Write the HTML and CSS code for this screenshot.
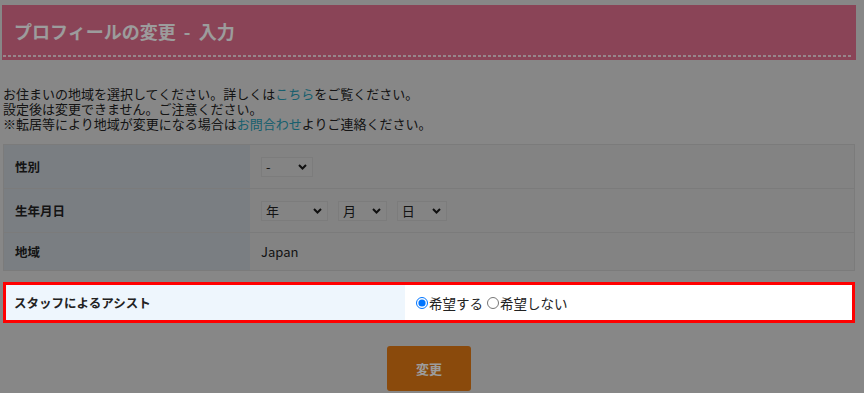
FILE: index.html
```html
<!DOCTYPE html>
<html lang="ja">
<head>
    <meta charset="UTF-8">
    <title>プロフィールの変更 - 入力</title>
    <link rel="stylesheet" href="styles.css">
</head>
<body>
    <div class="page">
        <div class="title-bar">
            <h1>プロフィールの変更 &nbsp;-&nbsp; 入力</h1>
        </div>

        <p class="note">
            お住まいの地域を選択してください。詳しくは<a href="#">こちら</a>をご覧ください。<br>
            設定後は変更できません。ご注意ください。<br>
            ※転居等により地域が変更になる場合は<a href="#">お問合わせ</a>よりご連絡ください。
        </p>

        <table class="form-table">
            <tr class="row-tall">
                <th>性別</th>
                <td>
                    <span class="sel w-sex">
                        <select><option>-</option><option>男性</option><option>女性</option></select>
                        <svg class="chev" width="9" height="6" viewBox="0 0 9 6"><path d="M1 1l3.5 3.5L8 1" fill="none" stroke="#1a1a1a" stroke-width="2"/></svg>
                    </span>
                </td>
            </tr>
            <tr class="row-tall">
                <th>生年月日</th>
                <td>
                    <span class="sel w-year">
                        <select><option>年</option></select>
                        <svg class="chev" width="9" height="6" viewBox="0 0 9 6"><path d="M1 1l3.5 3.5L8 1" fill="none" stroke="#1a1a1a" stroke-width="2"/></svg>
                    </span>
                    <span class="sel w-month">
                        <select><option>月</option></select>
                        <svg class="chev" width="9" height="6" viewBox="0 0 9 6"><path d="M1 1l3.5 3.5L8 1" fill="none" stroke="#1a1a1a" stroke-width="2"/></svg>
                    </span>
                    <span class="sel w-day">
                        <select><option>日</option></select>
                        <svg class="chev" width="9" height="6" viewBox="0 0 9 6"><path d="M1 1l3.5 3.5L8 1" fill="none" stroke="#1a1a1a" stroke-width="2"/></svg>
                    </span>
                </td>
            </tr>
            <tr class="row-short">
                <th>地域</th>
                <td>Japan</td>
            </tr>
        </table>

        <div class="assist-row">
            <div class="assist-label">スタッフによるアシスト</div>
            <div class="assist-value">
                <label><input type="radio" name="assist" checked>希望する</label>
                <label><input type="radio" name="assist">希望しない</label>
            </div>
        </div>

        <div class="actions">
            <button class="submit-btn">変更</button>
        </div>
    </div>

    <div class="shade"></div>
</body>
</html>
```

FILE: styles.css
```css
html, body {
    margin: 0;
    padding: 0;
}
body {
    background-color: #dddddd;
    color: #222;
    font-family: "Noto Sans CJK JP", "Liberation Sans", sans-serif;
    font-size: 13px;
}
.page {
    width: 852px;
    margin: 5px 0 0 3px;
}
.title-bar {
    margin: 0 -1px;
    height: 55px;
    padding: 0 3px 3px 1px;
    box-sizing: border-box;
    background-color: #e26f8f;
}
.title-bar h1 {
    margin: 0;
    height: 52px;
    padding: 3px 0 0 11px;
    box-sizing: border-box;
    line-height: 46px;
    font-size: 18px;
    font-weight: bold;
    color: #fff;
    background-image: repeating-linear-gradient(90deg, rgba(255,255,255,0.75) 0 3px, transparent 3px 5px);
    background-size: 100% 2px;
    background-position: left bottom;
    background-repeat: no-repeat;
}
.note {
    margin: 26px 0 13px;
    line-height: 15px;
}
.note a {
    color: #299cb4;
    text-decoration: none;
}
.form-table {
    width: 100%;
    border-collapse: collapse;
    border: 1px solid #cacaca;
}
.form-table th,
.form-table td {
    border-bottom: 1px solid #cacaca;
    padding: 0 11px;
    text-align: left;
    vertical-align: middle;
}
.form-table th {
    width: 224px;
    background-color: #c8cfd5;
    font-size: 12.5px;
    font-weight: bold;
}
.form-table td {
    background-color: #d7d7d7;
}
.row-tall { height: 44px; }
.row-short { height: 38px; }

.sel {
    position: relative;
    display: inline-block;
    vertical-align: middle;
    margin-right: 7px;
}
.sel select {
    appearance: none;
    -webkit-appearance: none;
    height: 20px;
    padding: 0 0 0 4px;
    border: 1px solid #cbcbcb;
    border-radius: 0;
    background-color: #d8d8d8;
    color: #222;
    font-family: "Noto Sans CJK JP", "Liberation Sans", sans-serif;
    font-size: 13px;
    line-height: 18px;
}
.sel .chev {
    position: absolute;
    right: 6px;
    top: 7px;
    pointer-events: none;
}
.w-sex select { width: 52px; }
.w-year select { width: 67px; }
.w-month select { width: 49px; }
.w-day select { width: 50px; }

.assist-row {
    position: relative;
    z-index: 10;
    display: flex;
    height: 41px;
    margin-top: 11px;
    border: 3px solid #ff0000;
    box-sizing: border-box;
}
.assist-label {
    width: 399px;
    box-sizing: border-box;
    padding-left: 8px;
    display: flex;
    align-items: center;
    background-color: #eef6fd;
    font-size: 12.5px;
    font-weight: bold;
}
.assist-value {
    flex: 1;
    padding-left: 11px;
    display: flex;
    align-items: center;
    gap: 4px;
    background-color: #fff;
    font-size: 13.5px;
}
.assist-value label {
    display: flex;
    align-items: center;
}
.assist-value input {
    width: 12px;
    height: 12px;
    margin: 0 1px 0 0;
}

.actions {
    display: flex;
    justify-content: center;
    margin-top: 23px;
}
.submit-btn {
    width: 84px;
    height: 45px;
    border: none;
    border-radius: 3px;
    background-color: #e27915;
    color: #fff;
    font-family: "Noto Sans CJK JP", "Liberation Sans", sans-serif;
    font-size: 13px;
    font-weight: bold;
}

.shade {
    position: fixed;
    top: 0;
    left: 0;
    right: 0;
    bottom: 0;
    z-index: 5;
    background-color: rgba(0,0,0,0.39);
}
```
